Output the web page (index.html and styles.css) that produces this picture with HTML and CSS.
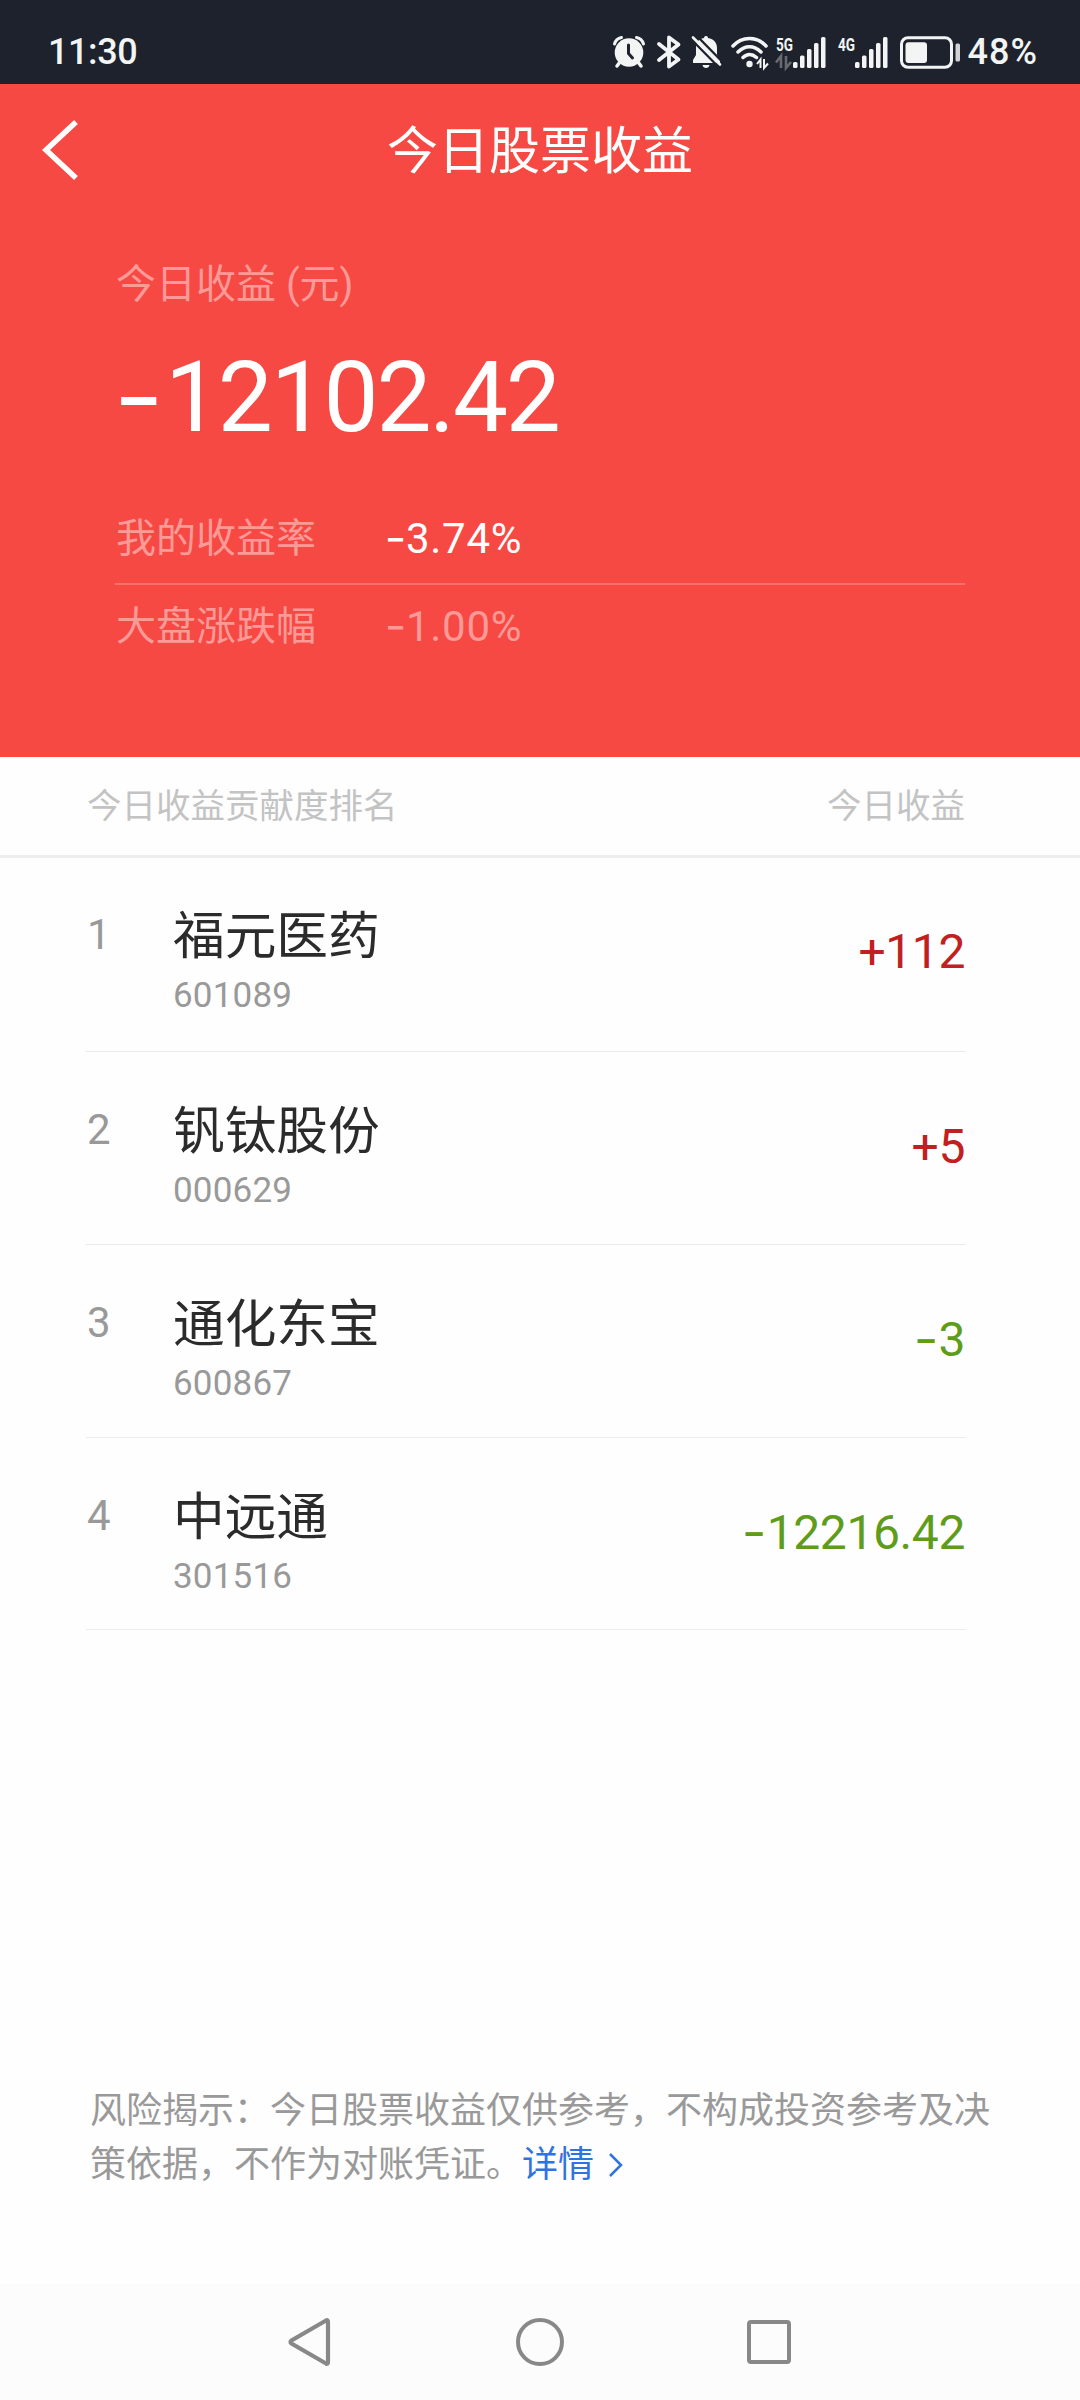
FILE: index.html
```html
<!DOCTYPE html>
<html lang="zh-CN">
  <head>
    <meta charset="UTF-8" />
    <meta name="viewport" content="width=device-width, initial-scale=1.0" />
    <title>今日股票收益</title>
    <link rel="stylesheet" href="styles.css">
  </head>
  <body>
    <div class="status-bar">
      <span class="time">11:30</span>
      <div class="status-icons">
        <!-- alarm -->
        <svg class="alarm" width="32" height="33" viewBox="0 0 32 33">
          <path d="M1.5 8A9 9 0 0 1 8.5 1.500M30.500 8A9 9 0 0 0 23.500 1.500" fill="none" stroke="#f3f5f5" stroke-width="3" stroke-linecap="round" />
          <path d="M7 26L4 30M25 26L28 30" stroke="#f3f5f5" stroke-width="3.500" stroke-linecap="round" />
          <circle cx="16" cy="16.500" r="14.300" fill="#f3f5f5" />
          <path d="M15.500 9V17.500L19.500 22" fill="none" stroke="#1e222c" stroke-width="3" stroke-linecap="round" />
        </svg>
        <!-- bluetooth -->
        <svg class="bluetooth" width="24" height="34" viewBox="0 0 24 34">
          <path d="M2 9L21.500 24.500L12 31.500V2.500L21.500 9.500L2 25" fill="none" stroke="#f3f5f5" stroke-width="3.800" stroke-linejoin="round" stroke-linecap="round" />
        </svg>
        <!-- muted bell -->
        <svg class="bell" width="31" height="34" viewBox="0 0 31 34">
          <path d="M15 1C17 1 17 3 17 3C23 4 26 8 26 13V20L29 25V28H2V25L5 20V13C5 8 7 4 13 3C13 3 13 1 15 1Z" fill="#f3f5f5" />
          <path d="M11.500 30H18.500C18 34 12 34 11.500 30Z" fill="#f3f5f5" />
          <path d="M-1 3L27 31.500M5 0L32 27.500" stroke="#1e222c" stroke-width="2.400" />
          <path d="M2 2.500L29 29.500" stroke="#f3f5f5" stroke-width="2.600" stroke-linecap="round" />
        </svg>
        <!-- wifi -->
        <svg class="wifi" width="38" height="33" viewBox="0 0 38 33">
          <path d="M2 10C11 0 26 0 35 10M7 16C14 9 23 9 30 16M12 21.500C16 17.500 21 17.500 25.500 21.500" fill="none" stroke="#f3f5f5" stroke-width="3.500" stroke-linecap="round" />
          <circle cx="18.500" cy="28" r="3.200" fill="#f3f5f5" />
          <path d="M26 28L29.500 23.500V32M33 23V32L37 27.500" fill="none" stroke="#f3f5f5" stroke-width="2" />
        </svg>
        <!-- 5G signal -->
        <svg class="signal-5g" width="51" height="33" viewBox="0 0 51 33">
          <text class="net" x="0" y="15" textLength="17" lengthAdjust="spacingAndGlyphs">5G</text>
          <path d="M0 26.500L5 20V32M10 20V32L15 26" fill="none" stroke="#676a71" stroke-width="2.600" />
          <g fill="#f3f5f5">
            <rect x="17" y="26" width="4.500" height="6" rx="1.500" />
            <rect x="24" y="19.500" width="4.500" height="12.500" rx="1.500" />
            <rect x="31" y="13" width="4.500" height="19" rx="1.500" />
            <rect x="38" y="7" width="4.500" height="25" rx="1.500" />
            <rect x="45" y="1" width="4.500" height="31" rx="1.500" />
          </g>
        </svg>
        <!-- 4G signal -->
        <svg class="signal-4g" width="51" height="33" viewBox="0 0 51 33">
          <text class="net" x="0" y="15" textLength="17" lengthAdjust="spacingAndGlyphs">4G</text>
          <g fill="#f3f5f5">
            <rect x="17" y="26" width="4.500" height="6" rx="1.500" />
            <rect x="24" y="19.500" width="4.500" height="12.500" rx="1.500" />
            <rect x="31" y="13" width="4.500" height="19" rx="1.500" />
            <rect x="38" y="7" width="4.500" height="25" rx="1.500" />
            <rect x="45" y="1" width="4.500" height="31" rx="1.500" />
          </g>
        </svg>
        <!-- battery -->
        <svg class="battery" width="61" height="33" viewBox="0 0 61 33">
          <rect x="1.500" y="1.700" width="50" height="29.600" rx="6.500" fill="none" stroke="#f3f5f5" stroke-width="3" />
          <rect x="5.500" y="6.300" width="21.500" height="20.700" rx="3" fill="#f3f5f5" />
          <rect x="55.500" y="7.500" width="4.500" height="18" rx="1.500" fill="#d0d2d4" />
        </svg>
      </div>
      <span class="battery-level">48%</span>
    </div>

    <div class="hero">
      <div class="nav">
        <svg class="back" width="40" height="64" viewBox="0 0 40 64">
          <path d="M36 3L6 31L36 59" fill="none" stroke="#fff" stroke-width="5.500" />
        </svg>
        <h1>今日股票收益</h1>
      </div>
      <div class="summary">
        <div class="label">今日收益 (元)</div>
        <div class="total"><span class="minus">-</span>12102.42</div>
        <div class="rate mine">
          <span class="rate-name">我的收益率</span>
          <span class="rate-value"><span class="minus">-</span>3.74%</span>
        </div>
        <div class="rate">
          <span class="rate-name">大盘涨跌幅</span>
          <span class="rate-value"><span class="minus">-</span>1.00%</span>
        </div>
      </div>
    </div>

    <div class="list-head">
      <span>今日收益贡献度排名</span>
      <span>今日收益</span>
    </div>

    <div class="list">
      <div class="stock">
        <span class="rank">1</span>
        <div class="info">
          <div class="name">福元医药</div>
          <div class="code">601089</div>
        </div>
        <span class="value up">+112</span>
      </div>
      <div class="stock">
        <span class="rank">2</span>
        <div class="info">
          <div class="name">钒钛股份</div>
          <div class="code">000629</div>
        </div>
        <span class="value up">+5</span>
      </div>
      <div class="stock">
        <span class="rank">3</span>
        <div class="info">
          <div class="name">通化东宝</div>
          <div class="code">600867</div>
        </div>
        <span class="value down"><span class="minus">-</span>3</span>
      </div>
      <div class="stock">
        <span class="rank">4</span>
        <div class="info">
          <div class="name">中远通</div>
          <div class="code">301516</div>
        </div>
        <span class="value down"><span class="minus">-</span>12216.42</span>
      </div>
    </div>

    <p class="risk">风险揭示：今日股票收益仅供参考，不构成投资参考及决策依据，不作为对账凭证。<a class="detail">详情<svg class="more" width="16" height="26" viewBox="0 0 16 26"><path d="M2 2L13 13L2 24" fill="none" stroke="#2d74de" stroke-width="2.500" /></svg></a></p>

    <div class="system-nav">
      <svg width="48" height="52" viewBox="0 0 48 52">
        <path d="M39 4.500Q41 3.500 41 6V46Q41 48.500 39 47.500L4.500 27.500Q2.500 26 4.500 24.500Z" fill="none" stroke="#888" stroke-width="4.200" />
      </svg>
      <svg width="48" height="52" viewBox="0 0 48 52">
        <circle cx="24" cy="26" r="22" fill="none" stroke="#888" stroke-width="4" />
      </svg>
      <svg width="48" height="52" viewBox="0 0 48 52">
        <rect x="4" y="6" width="40" height="40" rx="2" fill="none" stroke="#888" stroke-width="4" />
      </svg>
    </div>
  </body>
</html>
```
FILE: styles.css
```css
* {
  box-sizing: border-box;
}

body {
  margin: 0;
  width: 1080px;
  height: 2400px;
  display: flex;
  flex-direction: column;
  background-color: #fefefe;
  font-family: Roboto, "Noto Sans CJK SC", sans-serif;
  line-height: 1.4;
}

svg {
  display: block;
  flex: none;
  overflow: visible;
}

/* Status bar */
.status-bar {
  height: 84px;
  padding: 20px 42px 0 48px;
  display: flex;
  align-items: center;
  background-color: #1e222c;
  color: #f3f5f5;
  font-size: 36px;
  font-weight: 500;
}

.time {
  letter-spacing: -0.4px;
}

.status-icons {
  display: flex;
  align-items: center;
  margin-left: auto;
}

.bluetooth {
  margin-left: 12px;
}

.bell {
  margin-left: 10px;
}

.wifi {
  margin-left: 9px;
}

.signal-5g {
  margin-left: 7px;
}

.signal-4g {
  margin-left: 11px;
}

.battery {
  margin-left: 11px;
}

.net {
  font-size: 19px;
  font-weight: 700;
  fill: #f3f5f5;
}

.battery-level {
  margin-left: 7px;
  letter-spacing: 1px;
}

/* Red summary block */
.hero {
  height: 673px;
  background-color: #f64944;
  color: #fff;
}

.nav {
  height: 134px;
  padding: 0 40px;
  display: flex;
  align-items: center;
}

.nav h1 {
  flex: 1;
  margin: 0 40px 0 0;
  padding-top: 2px;
  text-align: center;
  font-size: 51px;
  font-weight: 400;
}

.summary {
  padding: 37px 115px 0 115px;
}

.label {
  padding-left: 1px;
  font-size: 40px;
  line-height: 60px;
  color: #fd9a97;
}

.total {
  margin-top: 3px;
  font-size: 98px;
  line-height: 160px;
  letter-spacing: -2.2px;
}

/* wider dash than the Roboto one */
.minus {
  display: inline-block;
  font-family: Inter, sans-serif;
  line-height: 1;
  transform: scaleX(1.12);
}

.total .minus {
  margin: 0 6px 0 1px;
}

.rate {
  display: flex;
  align-items: center;
  height: 84px;
  padding-left: 1px;
  font-size: 40px;
  color: #fd9a97;
}

.mine {
  height: 87px;
  margin-top: 20px;
  padding-bottom: 3px;
  border-bottom: 2px solid #f8706c;
}

.rate-name {
  width: 270px;
}

.rate-value {
  font-size: 42px;
  letter-spacing: 0.7px;
}

.mine .rate-value {
  color: #fff;
}

/* Ranking list */
.list-head {
  height: 101px;
  padding: 0 115px 0 87px;
  display: flex;
  align-items: center;
  justify-content: space-between;
  border-bottom: 3px solid #ededed;
  font-size: 34.5px;
  color: #c3c3c3;
}

.list {
  padding: 0 114px 0 86px;
}

.stock {
  display: flex;
  height: 193px;
  padding-top: 42px;
  border-bottom: 1px solid #ebebeb;
}

.stock:first-child {
  height: 194px;
  padding-top: 41px;
}

.stock:last-child {
  height: 192px;
}

.rank {
  width: 87px;
  padding-left: 1px;
  font-size: 42px;
  line-height: 72px;
  color: #999;
}

.info {
  flex: 1;
}

.name {
  padding-top: 2px;
  font-size: 51.7px;
  line-height: 72px;
  color: #2b2b2b;
}

.code {
  font-size: 35px;
  line-height: 46px;
  letter-spacing: 0.2px;
  color: #999;
}

.value {
  margin-right: 1px;
  font-size: 48px;
  line-height: 106px;
  letter-spacing: -0.4px;
}

.value .minus {
  margin-right: 2px;
}

.up {
  color: #c02020;
}

.down {
  color: #5f9c1a;
}

/* Risk notice */
.risk {
  width: 902px;
  margin: auto 0 92px 90px;
  font-size: 36px;
  line-height: 54px;
  color: #999;
}

.detail {
  color: #2d74de;
}

.more {
  display: inline-block;
  margin-left: 14px;
  vertical-align: -1px;
}

/* System navigation */
.system-nav {
  height: 116px;
  display: flex;
  align-items: center;
  justify-content: center;
  gap: 181px;
  background-color: #fcfcfc;
}
```
